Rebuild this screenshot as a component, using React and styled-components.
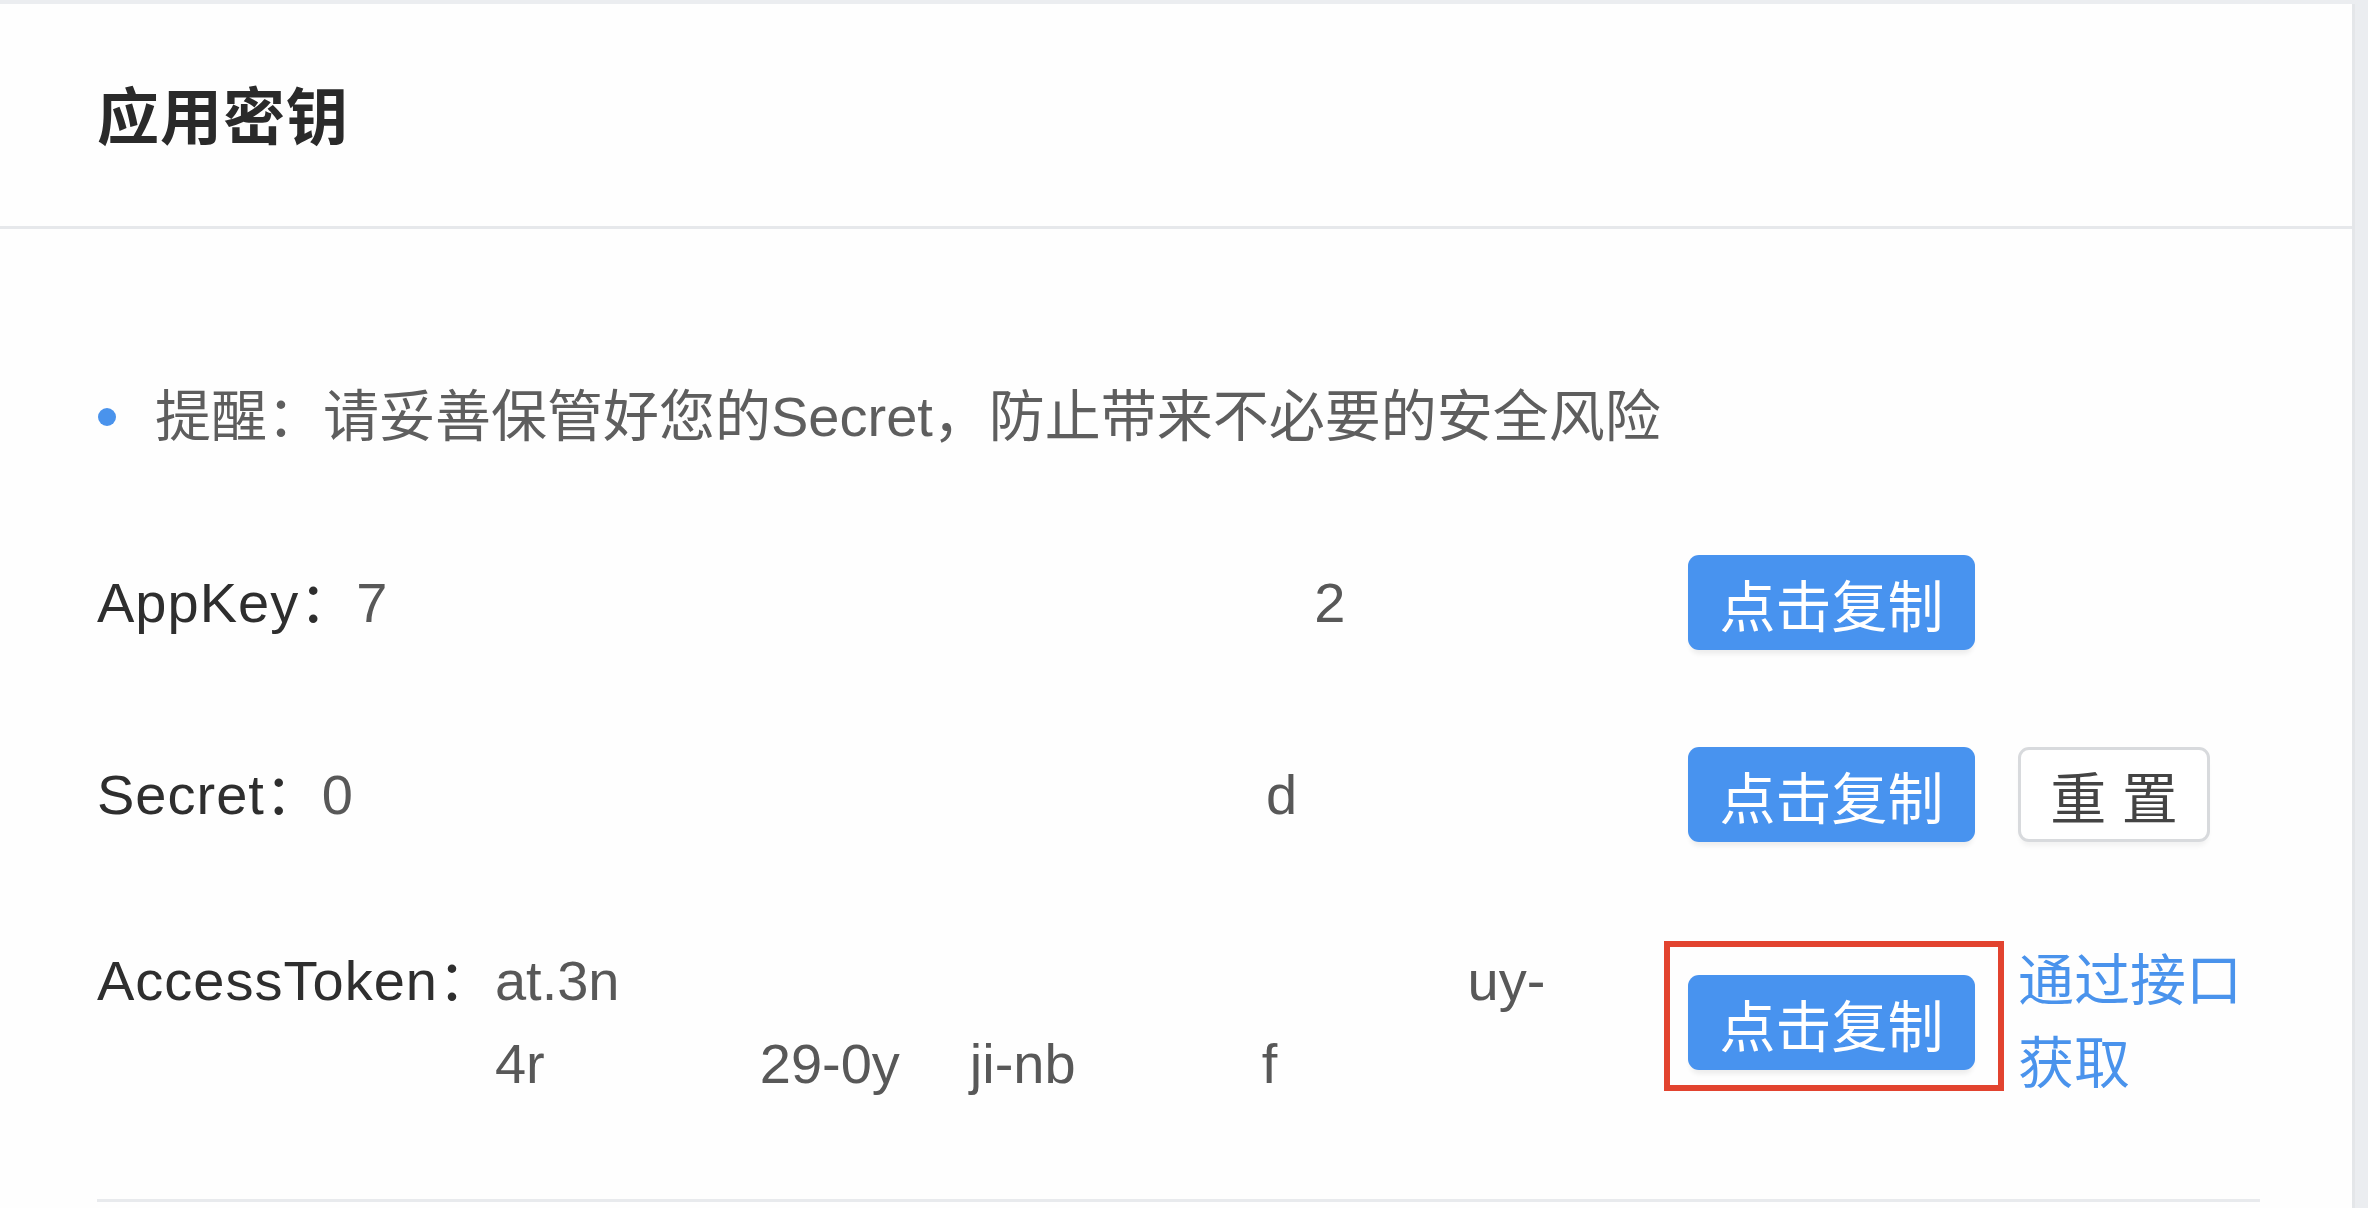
import React from "react";
import styled, { createGlobalStyle } from "styled-components";

const GlobalStyle = createGlobalStyle`
  html, body {
    margin: 0;
    padding: 0;
    background: #ebedf0;
  }
  body {
    font-family: "Liberation Sans", "Noto Sans CJK SC", sans-serif;
  }
`;

const StyledCard = styled.section`
  margin-top: 4px;
  width: 2355px;
  min-height: 1204px;
  background: #fefefe;
  border-right: 3px solid #e4e6e9;
  box-sizing: border-box;
`;

const StyledHeader = styled.header`
  display: flex;
  align-items: center;
  height: 225px;
  padding: 0 0 4px 97px;
  box-sizing: border-box;
  border-bottom: 3px solid #e6e8eb;

  & .title {
    margin: 0;
    font-size: 62px;
    font-weight: bold;
    color: #2a2a2a;
    letter-spacing: 1px;
  }
`;

const StyledBody = styled.div`
  display: flex;
  flex-direction: column;
  gap: 97px;
  padding: 146px 92px 0 97px;
`;

const StyledNotice = styled.p`
  display: flex;
  align-items: center;
  gap: 39px;
  margin: 0;
  padding-left: 1px;
  font-size: 56px;
  line-height: 83px;
  color: #5e5e5e;

  &::before {
    content: "";
    width: 18px;
    height: 18px;
    border-radius: 50%;
    background: #4a93ec;
  }
`;

const StyledRow = styled.div`
  display: flex;
  align-items: center;
  font-size: 56px;
  line-height: 83px;
`;

const StyledField = styled.div`
  display: flex;
  flex: 0 0 1591px;
  align-items: flex-start;

  & .label {
    color: #2e2e2e;
    letter-spacing: 1px;
    white-space: nowrap;
  }
`;

const StyledValue = styled.div`
  display: flex;
  flex-direction: column;
  color: #585858;
`;

const StyledLine = styled.div`
  display: flex;
  white-space: pre;
`;

const StyledFrag = styled.span`
  margin-left: ${(props) => props.$gap || 0}px;
`;

const StyledActions = styled.div`
  display: flex;
  align-items: center;
  gap: 43px;
  flex: 1;
`;

const StyledCopyButton = styled.button`
  width: 287px;
  height: 95px;
  padding: 0;
  border: none;
  border-radius: 11px;
  background: #4893ef;
  color: #ffffff;
  font-family: inherit;
  font-size: 56px;
  box-shadow: 0 6px 5px -2px rgba(0, 0, 0, 0.07);
  cursor: pointer;
`;

const StyledResetButton = styled.button`
  width: 192px;
  height: 95px;
  padding: 0;
  border: 3px solid #d8dadd;
  border-radius: 11px;
  background: #ffffff;
  color: #444444;
  font-family: inherit;
  font-size: 56px;
  box-shadow: 0 6px 5px -2px rgba(0, 0, 0, 0.05);
  cursor: pointer;
`;

const StyledHighlight = styled.span`
  position: relative;
  display: inline-flex;

  &::after {
    content: "";
    position: absolute;
    top: -34px;
    right: -29px;
    bottom: -21px;
    left: -24px;
    border: 6px solid #e2432f;
    pointer-events: none;
  }
`;

const StyledLink = styled.a`
  width: 240px;
  color: #4a93ec;
  text-decoration: none;
  cursor: pointer;
`;

const StyledDivider = styled.hr`
  margin: -3px 0 0 0;
  border: none;
  border-top: 3px solid #e8eaed;
`;

// 打码后的值, 只保留露出来的几段
const keys = [
  {
    label: "AppKey：",
    lines: [[{ t: "7" }, { t: "2", gap: 927 }]],
    reset: false,
  },
  {
    label: "Secret：",
    lines: [[{ t: "0" }, { t: "d", gap: 913 }]],
    reset: true,
  },
  {
    label: "AccessToken：",
    lines: [
      [{ t: "at.3n" }, { t: "uy-", gap: 848 }],
      [
        { t: "4r" },
        { t: "29-0y", gap: 215 },
        { t: "ji-nb", gap: 70 },
        { t: "f", gap: 186 },
      ],
    ],
    highlight: true,
    link: true,
  },
];

const KeyRow = ({ item }) => {
  const copyButton = <StyledCopyButton>点击复制</StyledCopyButton>;
  return (
    <StyledRow>
      <StyledField>
        <span className="label">{item.label}</span>
        <StyledValue>
          {item.lines.map((line, i) => (
            <StyledLine key={i}>
              {line.map((frag, j) => (
                <StyledFrag key={j} $gap={frag.gap}>
                  {frag.t}
                </StyledFrag>
              ))}
            </StyledLine>
          ))}
        </StyledValue>
      </StyledField>
      <StyledActions>
        {item.highlight ? <StyledHighlight>{copyButton}</StyledHighlight> : copyButton}
        {item.reset && <StyledResetButton>重 置</StyledResetButton>}
        {item.link && <StyledLink>通过接口获取</StyledLink>}
      </StyledActions>
    </StyledRow>
  );
};

const App = () => {
  return (
    <>
      <GlobalStyle />
      <StyledCard>
        <StyledHeader>
          <h2 className="title">应用密钥</h2>
        </StyledHeader>
        <StyledBody>
          <StyledNotice>提醒：请妥善保管好您的Secret，防止带来不必要的安全风险</StyledNotice>
          {keys.map((item) => (
            <KeyRow key={item.label} item={item} />
          ))}
          <StyledDivider />
        </StyledBody>
      </StyledCard>
    </>
  );
};

export default App;
